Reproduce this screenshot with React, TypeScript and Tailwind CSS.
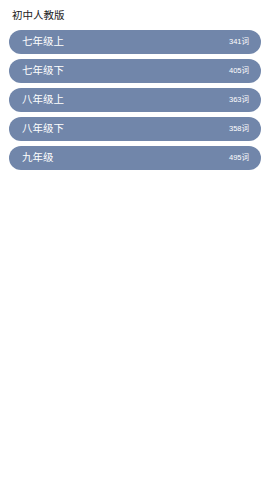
import React from "react";

const items = [
  { name: "七年级上", count: 341 },
  { name: "七年级下", count: 405 },
  { name: "八年级上", count: 363 },
  { name: "八年级下", count: 358 },
  { name: "九年级", count: 495 },
];

export default function App() {
  return (
    <div
      className="w-[270px] min-h-[479px] bg-white"
      style={{ fontFamily: '"Liberation Sans", "Noto Sans CJK SC", sans-serif' }}
    >
      <div className="pl-[12px] pt-[9px] h-[30px] text-[10.5px] leading-[13px] text-[#222]">初中人教版</div>
      <div className="flex flex-col gap-[5px] px-[9px]">
        {items.map((it) => (
          <div
            key={it.name}
            className="h-[24px] rounded-full bg-[#7186aa] flex items-center justify-between pl-[13px] pr-[12px] text-white"
          >
            <span className="text-[10.5px]">{it.name}</span>
            <span className="text-[7.5px]">{it.count}词</span>
          </div>
        ))}
      </div>
    </div>
  );
}
